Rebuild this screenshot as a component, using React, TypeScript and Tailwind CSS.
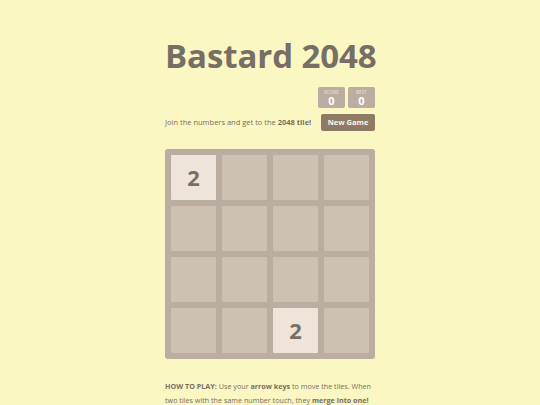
const board: (number | null)[] = [
  2, null, null, null,
  null, null, null, null,
  null, null, null, null,
  null, null, 2, null,
];

function ScoreBox({ label, value }: { label: string; value: number }) {
  return (
    <div className="w-[27px] h-[21px] rounded-[2px] bg-[#bbada0] flex flex-col items-center pt-[2px]">
      <div className="text-[4.5px] leading-[6px] uppercase text-[#eee4da] tracking-wide">{label}</div>
      <div className="text-[11px] leading-[11px] font-bold text-white">{value}</div>
    </div>
  );
}

export default function App() {
  return (
    <div className="min-h-[405px] w-full bg-[#fbf7c2] text-[#776e65] font-['Open_Sans',sans-serif]">
      <div className="w-[210px] mx-auto pt-[39px]">
        <h1 className="text-[33px] leading-[33px] font-bold tracking-[-0.1px] whitespace-nowrap">Bastard 2048</h1>
        <div className="flex justify-end gap-[3px] mt-[15px]">
          <ScoreBox label="Score" value={0} />
          <ScoreBox label="Best" value={0} />
        </div>
        <div className="flex items-center justify-between mt-[6px]">
          <p className="text-[7.5px] leading-[17px]">
            Join the numbers and get to the <strong>2048 tile!</strong>
          </p>
          <button className="w-[54px] h-[17px] rounded-[2px] bg-[#8f7a66] text-[#f9f6f2] text-[7.5px] font-bold">
            New Game
          </button>
        </div>
        <div className="mt-[18px] w-[210px] h-[210px] rounded-[3px] bg-[#bbada0] p-[6px] grid grid-cols-4 grid-rows-4 gap-[6px]">
          {board.map((v, i) => (
            <div
              key={i}
              className={
                v
                  ? 'rounded-[1px] bg-[#eee4da] flex items-center justify-center text-[22px] font-bold'
                  : 'rounded-[1px] bg-[#cdc1b4]'
              }
            >
              {v}
            </div>
          ))}
        </div>
        <p className="mt-[20px] text-[7.2px] leading-[14px] w-[212px]">
          <strong>HOW TO PLAY:</strong> Use your <strong>arrow keys</strong> to move the tiles. When two tiles with
          the same number touch, they <strong>merge into one!</strong>
        </p>
      </div>
    </div>
  );
}
